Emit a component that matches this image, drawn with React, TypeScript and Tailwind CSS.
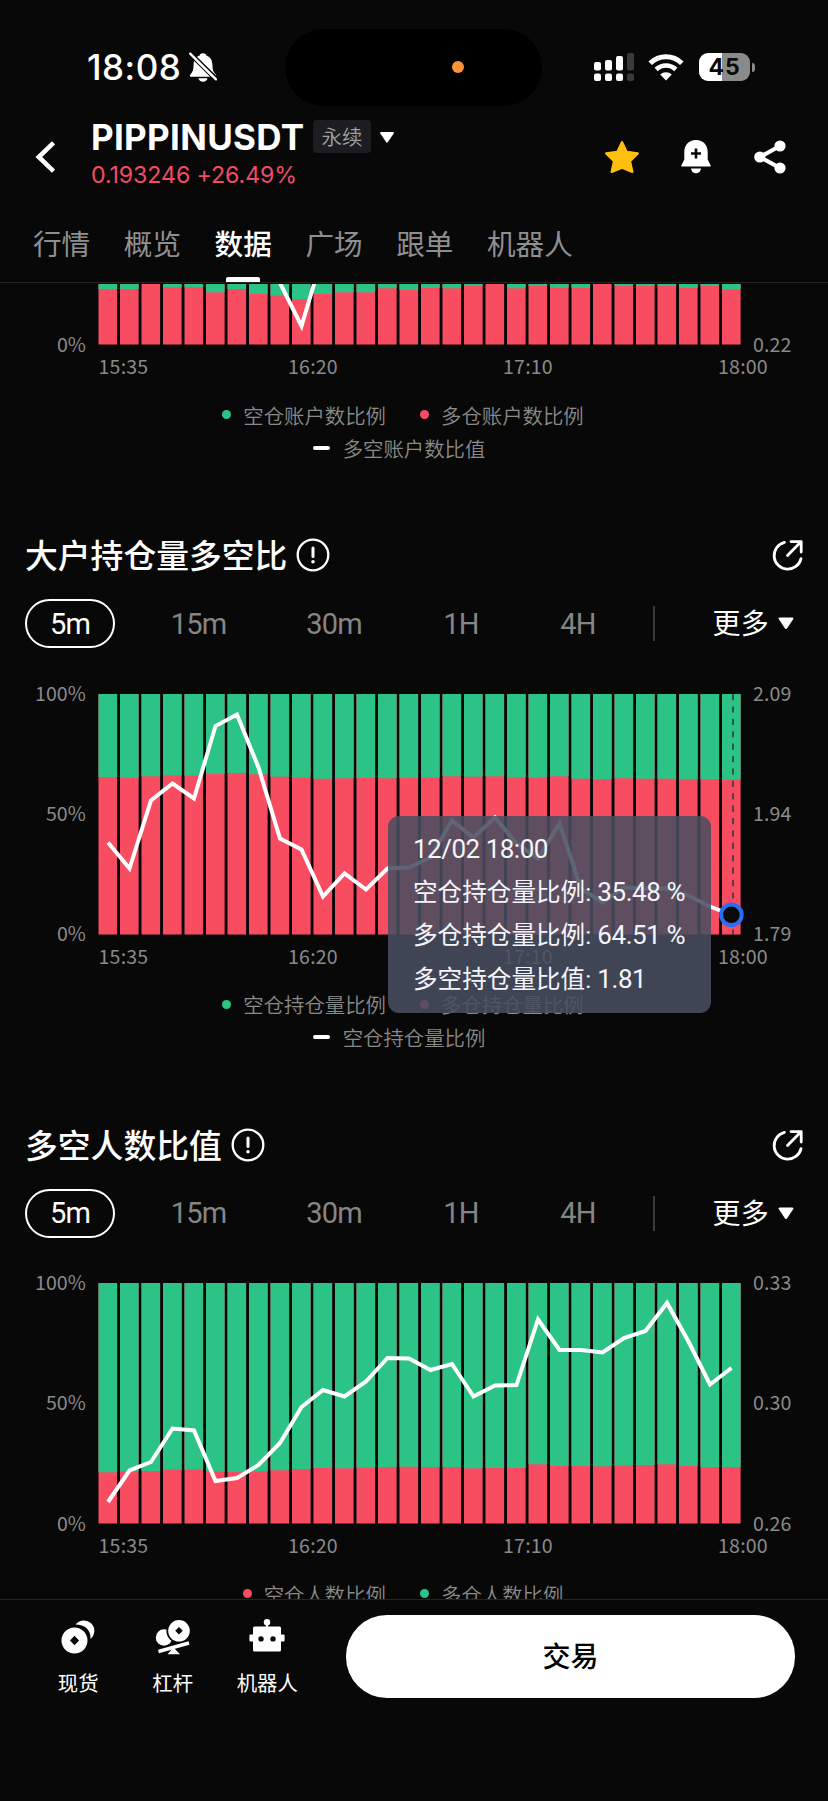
import React from "react";

const GREEN = "#2cc387";
const RED = "#f84c61";

const tabs = ["行情", "概览", "数据", "广场", "跟单", "机器人"];

type Legend = { color: string; label: string };

type ChartData = {
  split: number[];
  line: number[];
  left: string[];
  right: string[];
  legend: Legend[];
  lineLabel?: string;
};

// split and line are offsets from the top of a 240.5 high plot
const accounts: ChartData = {
  split: [
    185, 185, 178, 183.3, 183.3, 188.3, 185, 190, 191.7, 195.3, 190, 188.3, 188.3, 184.3, 186, 184,
    184.3, 182, 178, 184.3, 182, 184, 184, 178, 182, 182, 182, 184, 182, 185.3,
  ],
  line: [
    120, 118, 110, 112, 115, 125, 130, 145, 179, 222, 150, 140, 136, 120, 124, 118, 110, 106, 98, 110,
    104, 112, 110, 96, 102, 104, 102, 110, 104, 116,
  ],
  left: ["0%"],
  right: ["0.22"],
  legend: [
    { color: GREEN, label: "空仓账户数比例" },
    { color: RED, label: "多仓账户数比例" },
  ],
  lineLabel: "多空账户数比值",
};

const positions: ChartData = {
  split: [
    83, 84, 82.3, 81.3, 81.7, 80, 79, 80.3, 82.7, 83.7, 84.7, 84.3, 84, 84.3, 84, 83.7, 82.3, 82.7,
    82.3, 83.3, 83.7, 82.3, 84.7, 85, 84.3, 84.7, 84.7, 85.3, 85.3, 85.7,
  ],
  line: [
    148.5, 174.5, 106.5, 89.5, 104.5, 32, 20.5, 73.5, 144.5, 155.5, 202.5, 179.5, 195.5, 174.5, 173.5,
    163.5, 126.5, 143.5, 123.5, 149.5, 164.5, 129.5, 194.5, 208.5, 193.5, 194.5, 194.5, 201.5, 212.5,
    220.8,
  ],
  left: ["100%", "50%", "0%"],
  right: ["2.09", "1.94", "1.79"],
  legend: [
    { color: GREEN, label: "空仓持仓量比例" },
    { color: RED, label: "多仓持仓量比例" },
  ],
  lineLabel: "空仓持仓量比例",
};

const people: ChartData = {
  split: [
    189.3, 188.3, 188, 186.7, 186.7, 188.7, 189, 188.3, 187.3, 186, 185, 185.3, 184.7, 184, 183.7,
    184, 184, 185.3, 185, 185, 181.3, 183, 183, 183.3, 182.7, 182, 181.3, 183, 184.3, 184,
  ],
  line: [
    219, 187.5, 179, 145.5, 147.5, 198, 195, 182, 160, 124, 107, 113.5, 98.5, 75, 75.5, 87, 81, 113.5,
    102.5, 102, 36.5, 67, 67, 69.5, 55, 48, 20, 58.5, 101.5, 85,
  ],
  left: ["100%", "50%", "0%"],
  right: ["0.33", "0.30", "0.26"],
  legend: [
    { color: RED, label: "空仓人数比例" },
    { color: GREEN, label: "多仓人数比例" },
  ],
};

const Axis = ({ labels, className }: { labels: string[]; className: string }) => (
  <div
    className={`${className} -mt-[11px] -mb-[9px] flex flex-col text-[19.6px] leading-[20px] tracking-[0.1px] text-[#8a8a8a] ${
      labels.length > 1 ? "justify-between" : "justify-end"
    }`}
  >
    {labels.map((label) => (
      <span key={label}>{label}</span>
    ))}
  </div>
);

const Chart = ({ data, cursor }: { data: ChartData; cursor?: boolean }) => {
  const points = data.line.map((y, i) => `${10 + i * 21.5},${y}`).join(" ");

  return (
    <div>
      <div className="flex h-[240.5px]">
        <Axis labels={data.left} className="w-[86px] text-right" />
        <svg
          className="ml-3 h-[240.5px] w-[645px] shrink-0 overflow-visible"
          viewBox="0 0 645 240.5"
          fill="none"
        >
          {data.split.map((y, i) => (
            <g key={i}>
              <rect x={0.5 + i * 21.5} y={0} width={18.6} height={240.5} fill={RED} />
              <rect x={0.5 + i * 21.5} y={0} width={18.6} height={y} fill={GREEN} />
            </g>
          ))}
          <polyline points={points} stroke="#fff" strokeWidth={4} strokeMiterlimit={6} />
          {cursor && (
            <>
              <path d="M635 0V240" stroke="#333b3b" strokeWidth={1.6} strokeDasharray="6.2 6.2" />
              <circle cx={633.4} cy={220.8} r={10.3} fill="#0a0a0a" stroke="#2a6df2" strokeWidth={4} />
            </>
          )}
        </svg>
        <Axis labels={data.right} className="ml-[10px]" />
      </div>

      <div className="mt-[11.5px] flex pl-[98.5px] text-[19.6px] leading-5 tracking-[0.2px] text-[#8a8a8a]">
        <span className="w-[189.5px]">15:35</span>
        <span className="w-[215px]">16:20</span>
        <span className="w-[215px]">17:10</span>
        <span>18:00</span>
      </div>

      <div className="mt-[26.5px] flex w-[806px] justify-center gap-[34px] text-[20.4px] leading-6 font-[350] text-[#8a8a8a]">
        {data.legend.map(({ color, label }) => (
          <div key={label} className="flex items-center gap-3">
            <span className="size-[9px] rounded-full" style={{ backgroundColor: color }} />
            {label}
          </div>
        ))}
      </div>
      {data.lineLabel && (
        <div className="mt-[9px] flex w-[798px] items-center justify-center gap-[13px] text-[20.4px] leading-6 font-[350] text-[#8a8a8a]">
          <span className="h-1 w-[17px] rounded-full bg-white" />
          {data.lineLabel}
        </div>
      )}
    </div>
  );
};

const Caret = ({ className }: { className: string }) => (
  <svg viewBox="0 0 16 12" className={className} fill="#fff">
    <path d="M1.6 0h12.8q1.6.2.9 1.6L9 11q-1 1.2-2 0L.7 1.6Q0 .2 1.6 0z" />
  </svg>
);

const SectionHead = ({ title }: { title: string }) => (
  <>
    <div className="mt-[75.5px] flex h-10 items-center pr-[24px] pl-[25px]">
      <h2 className="pb-[2px] text-[32.8px] leading-[38px] font-medium text-white">{title}</h2>
      <svg viewBox="0 0 34 34" className="ml-[9px] size-[34px]" fill="none" stroke="#fff">
        <circle cx="17" cy="17" r="15.3" strokeWidth="2.3" />
        <path d="M17 10v8.6" strokeWidth="3" strokeLinecap="round" />
        <circle cx="17" cy="23.8" r="0.9" strokeWidth="1.8" />
      </svg>
      <svg
        viewBox="0 0 32 32"
        className="ml-auto size-8"
        fill="none"
        stroke="#fff"
        strokeWidth="2.8"
        strokeLinecap="round"
        strokeLinejoin="round"
      >
        <path d="M12.4 3.4A13.6 13.6 0 1 0 29 19.6" />
        <path d="M19 2.6h10.200v10.400M29 2.800L15.500 16.600" />
      </svg>
    </div>

    <div className="mt-6 mb-[45.5px] flex h-[49px] items-center pl-[25px] font-[Roboto,'Noto_Sans_CJK_SC',sans-serif] text-[29px] leading-8 tracking-[-0.8px] text-[#858585]">
      <span className="flex h-[49px] w-[90px] items-center justify-center rounded-full border-2 border-white text-white">
        5m
      </span>
      <span className="ml-[15px] w-[137px] text-center">15m</span>
      <span className="w-[134px] text-center">30m</span>
      <span className="w-[120px] text-center">1H</span>
      <span className="w-[114px] text-center">4H</span>
      <span className="ml-[18px] h-[35px] w-[1.5px] bg-[#3a3a3a]" />
      <span className="ml-[58px] pt-[3px] text-[28px] tracking-[0.2px] text-white">更多</span>
      <Caret className="ml-[9px] h-[13px] w-4" />
    </div>
  </>
);

const Tooltip = () => (
  <div className="absolute top-[122.5px] left-[388px] h-[197px] w-[323px] rounded-[11px] bg-[rgba(71,78,97,0.87)] py-[11.5px] pl-[25px] font-[Roboto,'Noto_Sans_CJK_SC',sans-serif] text-[24.6px] leading-[43.4px] whitespace-nowrap text-[#f4f5fa]">
    <p className="text-[26px] tracking-[-0.5px]">12/02 18:00</p>
    <p>
      空仓持仓量比例: <span className="text-[26px] tracking-[-0.4px]">35.48 %</span>
    </p>
    <p>
      多仓持仓量比例: <span className="text-[26px] tracking-[-0.4px]">64.51 %</span>
    </p>
    <p>
      多空持仓量比值: <span className="text-[26px] tracking-[-0.4px]">1.81</span>
    </p>
  </div>
);

const StatusBar = () => (
  <div className="flex h-[106px] items-center pt-[28px] font-[Inter,sans-serif]">
    <span className="ml-[87px] w-[97px] text-[35px] leading-[78px] font-medium tracking-[0.5px] text-white">
      18:08
    </span>
    <svg viewBox="0 0 28 30" className="ml-[5px] h-[30px] w-7">
      <path
        d="M14 1.200c1.900 0 3 .9 3.300 2.300 4.200 1.400 6 5 6.100 9.200.1 4.600.7 7.200 3.200 9.700 1 1.100.6 2.400-1 2.400H2.400c-1.600 0-2-1.300-1-2.400 2.500-2.500 3.100-5.100 3.200-9.700.1-4.200 1.900-7.800 6.100-9.200C11 2.100 12.100 1.200 14 1.200zM9.500 26.200h9c-.4 2.200-2 3.500-4.500 3.500s-4.100-1.300-4.500-3.500z"
        fill="#fff"
      />
      <path d="M1.500 0L30 28" stroke="#080808" strokeWidth="2.200" />
      <path d="M0 2.800L27 29.800" stroke="#080808" strokeWidth="1.200" />
      <path d="M1.200 1.600L27 27.400" stroke="#fff" strokeWidth="2.300" strokeLinecap="round" />
    </svg>
    <div className="ml-[68px] flex h-[77px] w-[257px] items-center rounded-full bg-black pl-[167px]">
      <span className="size-3 rounded-full bg-[#ff9233]" />
    </div>
    <svg viewBox="0 0 40 28" className="ml-[52px] h-7 w-10" fill="#fff">
      <rect x="0" y="9" width="7" height="8.5" rx="2" />
      <rect x="0" y="20.5" width="7" height="7.5" rx="2" />
      <rect x="11" y="7" width="7" height="10.5" rx="2" />
      <rect x="11" y="20.5" width="7" height="7.5" rx="2" />
      <rect x="22" y="3" width="7" height="14.5" rx="2" />
      <rect x="22" y="20.5" width="7" height="7.5" rx="2" />
      <rect x="33" y="0" width="7" height="17.5" rx="2" fill="#3a3a3a" />
      <rect x="33" y="20.5" width="7" height="7.5" rx="2" fill="#3a3a3a" />
    </svg>
    <svg viewBox="0 0 36 27" className="ml-[14px] h-[27px] w-9" fill="none" stroke="#fff">
      <path d="M2.2 9.3a22.4 22.4 0 0 1 31.6 0" strokeWidth="5" />
      <path d="M8.2 15.5a14 14 0 0 1 19.6 0" strokeWidth="4.6" />
      <path d="M18 26.5l-5.800-5.900a8.300 8.300 0 0 1 11.600 0z" fill="#fff" stroke="none" />
    </svg>
    <div className="ml-[15px] flex h-7 w-[51px] items-center justify-center rounded-[9px] bg-[linear-gradient(90deg,#fff_45%,#8a8a8a_45%)] text-[23px] font-bold tracking-[0.8px] text-[#0a0a0a]">
      45
    </div>
    <span className="ml-[2px] h-[9px] w-[3px] rounded-r-full bg-[#8a8a8a]" />
  </div>
);

const Header = () => (
  <header className="h-[283px] shrink-0 border-b border-[#242424]">
    <StatusBar />

    <div className="flex h-[100px] items-start">
      <svg
        viewBox="0 0 20 32"
        className="mt-[35px] ml-[35px] h-8 w-5"
        fill="none"
        stroke="#fff"
        strokeWidth="4.6"
      >
        <path d="M18.5 1.8L3.8 16l14.7 14.2" />
      </svg>
      <div className="mt-[14px] ml-[36px]">
        <div className="flex h-[34px] items-center">
          <h1 className="w-[215px] font-[Inter,sans-serif] text-[35px] leading-[34px] font-bold tracking-[0.3px] text-white">
            PIPPINUSDT
          </h1>
          <span className="mb-[2px] ml-[7px] h-[33px] w-[58px] rounded-[4px] bg-[#1b1d21] text-center text-[20.5px] leading-[33px] font-[350] text-[#a0a0a0]">
            永续
          </span>
          <Caret className="ml-[8px] h-[11px] w-4" />
        </div>
        <p className="mt-[7px] font-[Inter,sans-serif] text-[23.2px] leading-[28px] tracking-[-0.1px] text-[#f04c68]">
          0.193246 +26.49%
        </p>
      </div>

      <div className="mt-[34px] mr-[42px] ml-auto flex items-center">
        <svg viewBox="0 0 36 34" className="h-[34px] w-9" fill="#ffbf0f">
          <path
            d="M18 2.2l4.6 9.7 11.2 1.500-7.900 7.800 2.400 10.600L18 27.700 7.700 31.800l2.400-10.600L2.200 13.400l11.200-1.500z"
            stroke="#ffbf0f"
            strokeWidth="2.4"
            strokeLinejoin="round"
          />
        </svg>
        <svg viewBox="0 0 30 34" className="ml-[41px] h-[34px] w-[30px]" fill="#fff">
          <path d="M15 0C7.600 0 3.300 5.200 3.300 12v7.500L.3 25.500q-.3 1 .8 1h27.800q1.100 0 .8-1l-3-6V12C26.700 5.200 22.400 0 15 0zM10 28.500h10c-.4 3-2.200 4.800-5 4.800s-4.600-1.800-5-4.800z" />
          <path d="M15 8.500v10M10 13.500h10" stroke="#080808" strokeWidth="2.600" />
        </svg>
        <svg viewBox="0 0 32 34" className="ml-[43px] h-[34px] w-8" fill="#fff">
          <path d="M26 6L6 17l20 11" fill="none" stroke="#fff" strokeWidth="4" />
          <circle cx="26" cy="6" r="5.6" />
          <circle cx="5.8" cy="17" r="5.6" />
          <circle cx="26" cy="28" r="5.6" />
        </svg>
      </div>
    </div>

    <nav className="flex h-[76px] gap-[33.6px] pt-[16.5px] pl-[33px] text-[28.6px] text-[#8f8f92]">
      {tabs.map((tab) => (
        <div
          key={tab}
          className={`flex flex-col items-center leading-[40px] ${
            tab === "数据" ? "font-medium text-white" : ""
          }`}
        >
          {tab}
          {tab === "数据" && <span className="mt-[14px] h-[5px] w-[34px] rounded-t-[2px] bg-white" />}
        </div>
      ))}
    </nav>
  </header>
);

const SpotIcon = () => (
  <svg viewBox="0 0 36 36" className="size-9" fill="#fff">
    <path d="M15.500 5.500a10.500 10.500 0 1 1 15 14.500C31 11 25 5.500 15.500 5.500z" />
    <circle cx="14.5" cy="21.5" r="14.8" fill="#080808" />
    <path
      d="M14.500 8.500a13 13 0 1 1 0 26 13 13 0 0 1 0-26zm0 8.200L9.900 21.500l4.600 4.800 4.600-4.800z"
      fillRule="evenodd"
    />
  </svg>
);

const MarginIcon = () => (
  <svg viewBox="0 0 36 36" className="size-9" fill="#fff">
    <circle cx="9" cy="18.5" r="8.2" />
    <circle cx="24" cy="11.8" r="12.6" fill="#080808" />
    <path
      d="M24 1a10.800 10.800 0 1 1 0 21.600A10.800 10.800 0 0 1 24 1zm0 7l-3.800 3.800L24 15.600l3.800-3.800z"
      fillRule="evenodd"
    />
    <path d="M3.500 32.500L34 24" stroke="#fff" strokeWidth="3.4" fill="none" />
    <path d="M18.500 28.500l6.500 6.700H12.500z" />
  </svg>
);

const RobotIcon = () => (
  <svg viewBox="0 0 36 36" className="size-9" fill="#fff">
    <circle cx="18" cy="3.2" r="3.2" />
    <path d="M17 4h2v5h-2z" />
    <path
      d="M5.500 7.500h25q1.500 0 1.500 1.500v6.500h2.400q1.200 0 1.200 1.200v4.600q0 1.200-1.200 1.200H32V31q0 1.500-1.500 1.500h-25Q4 32.500 4 31v-8.500H1.600q-1.200 0-1.200-1.200v-4.600q0-1.200 1.200-1.200H4V9q0-1.500 1.500-1.500zM12 17.200a2.700 2.700 0 1 0 0 5.400 2.700 2.700 0 0 0 0-5.400zm12 0a2.700 2.700 0 1 0 0 5.400 2.700 2.700 0 0 0 0-5.400z"
      fillRule="evenodd"
    />
  </svg>
);

const shortcuts = [
  { label: "现货", Icon: SpotIcon },
  { label: "杠杆", Icon: MarginIcon },
  { label: "机器人", Icon: RobotIcon },
];

const Footer = () => (
  <footer className="flex h-[202px] shrink-0 items-start border-t border-[#242424] pt-[15px] pl-[31px]">
    {shortcuts.map(({ label, Icon }) => (
      <div key={label} className="flex w-[94.5px] flex-col items-center pt-[4px] text-[20.4px] text-white">
        <Icon />
        <span className="mt-[15px] leading-6">{label}</span>
      </div>
    ))}
    <button className="ml-[31.5px] h-[83px] w-[449px] rounded-[41px] bg-white pb-[3px] text-[28px] font-medium text-black">
      交易
    </button>
  </footer>
);

export default function App() {
  return (
    <div className="flex h-[1801px] w-[828px] flex-col overflow-hidden bg-[#080808] font-['Noto_Sans_CJK_SC',sans-serif]">
      <Header />
      <main className="mt-px flex-1 overflow-hidden">
        <div className="-mt-[180px]">
          <Chart data={accounts} />
        </div>
        <SectionHead title="大户持仓量多空比" />
        <div className="relative">
          <Chart data={positions} cursor />
          <Tooltip />
        </div>
        <SectionHead title="多空人数比值" />
        <Chart data={people} />
      </main>
      <Footer />
    </div>
  );
}
